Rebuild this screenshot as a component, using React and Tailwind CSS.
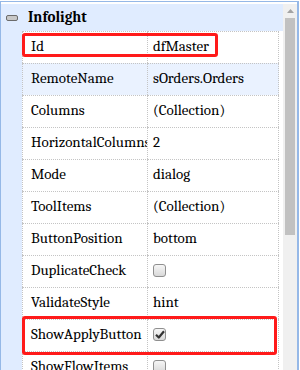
import React from "react";

const rows = [
  { name: "Id", value: "dfMaster" },
  { name: "RemoteName", value: "sOrders.Orders", selected: true },
  { name: "Columns", value: "(Collection)" },
  { name: "HorizontalColumns", value: "2" },
  { name: "Mode", value: "dialog" },
  { name: "ToolItems", value: "(Collection)" },
  { name: "ButtonPosition", value: "bottom" },
  { name: "DuplicateCheck", check: false },
  { name: "ValidateStyle", value: "hint" },
  { name: "ShowApplyButton", check: true },
  { name: "ShowFlowItems", check: false },
];

function Checkbox({ checked }) {
  return (
    <div className="w-[13px] h-[13px] rounded-[3px] border border-[#8f8f8f] bg-gradient-to-b from-[#f6f6f6] to-[#d9d9d9] flex items-center justify-center">
      {checked && (
        <svg width="10" height="9" viewBox="0 0 10 9">
          <path d="M1 4.8 L3.8 7.5 L9 1.2" fill="none" stroke="#333" strokeWidth="2.2" strokeLinejoin="round" />
        </svg>
      )}
    </div>
  );
}

export default function App() {
  return (
    <div className="w-[300px] h-[370px] overflow-hidden bg-white relative font-serif text-[15px] text-black">
      <div className="mt-[1px] w-[299px] h-[369px] flex border-t border-l border-r-2 border-[#95B8E7]">
        <div className="w-[282px] pt-[2px] flex flex-col">
          <div className="h-[27px] shrink-0 bg-[#E0ECFF] flex items-center">
            <div className="ml-[5px] w-[12px] h-[6px] rounded-[2px] border border-[#6b6b6b] bg-[#c8c8c8]" />
            <span className="ml-[10px] font-bold leading-none">Infolight</span>
          </div>
          {rows.map((r) => (
            <div key={r.name} className="flex h-[32px] shrink-0">
              <div className="w-[21px] bg-[#E0ECFF]" />
              <div
                className={
                  "w-[126px] border-t border-l border-r border-dotted border-[#c4c4c4] pl-[8px] pb-[2px] flex items-center whitespace-nowrap overflow-hidden " +
                  (r.selected ? "bg-[#EAF2FF]" : "")
                }
              >
                {r.name}
              </div>
              <div
                className={
                  "w-[131px] border-t border-r border-dotted border-[#c4c4c4] pl-[5px] pb-[2px] flex items-center whitespace-nowrap overflow-hidden " +
                  (r.selected ? "bg-[#EAF2FF]" : "")
                }
              >
                {r.check !== undefined ? <Checkbox checked={r.check} /> : r.value}
              </div>
            </div>
          ))}
        </div>
        <div className="w-[14px] mt-[2px] bg-[#f0f0f0] flex flex-col">
          <div className="h-[14px] shrink-0 flex items-center justify-center">
            <svg width="7" height="4" viewBox="0 0 7 4">
              <path d="M0 4 L3.5 0 L7 4 Z" fill="#a3a3a3" />
            </svg>
          </div>
          <div className="mx-[2px] h-[217px] shrink-0 bg-[#c1c1c1]" />
        </div>
      </div>
      <div className="absolute left-[22px] top-[33px] w-[196px] h-[24px] border-[3px] border-[#ff1a1a] rounded-[3px]" />
      <div className="absolute left-[22px] top-[316px] w-[255px] h-[39px] border-[3px] border-[#ff1a1a] rounded-[3px]" />
    </div>
  );
}
